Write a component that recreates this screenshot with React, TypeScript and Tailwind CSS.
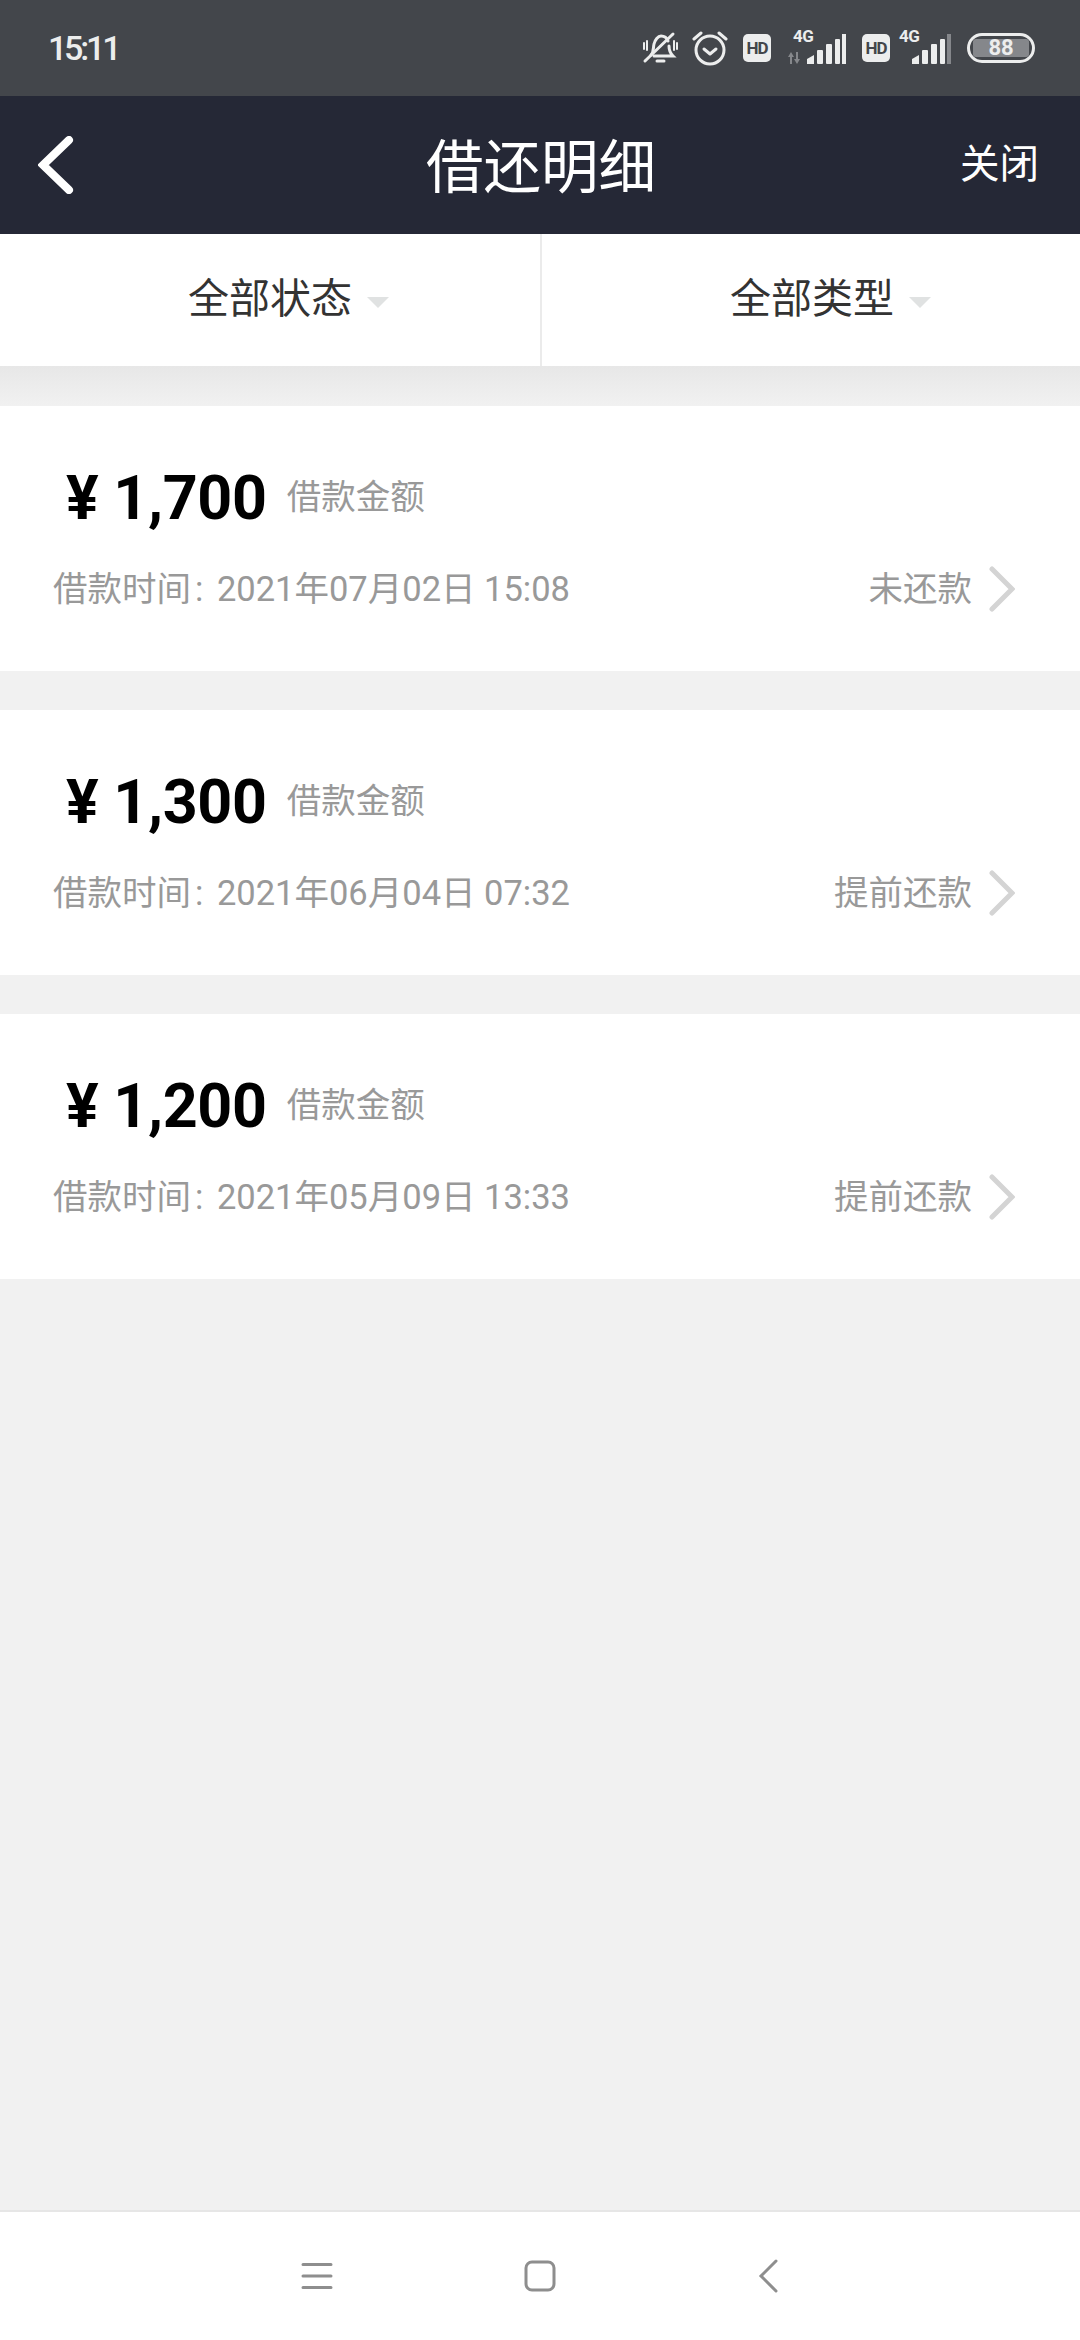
import { ReactNode } from 'react';

const loans = [
  { amount: '1,700', time: '2021年07月02日 15:08', status: '未还款' },
  { amount: '1,300', time: '2021年06月04日 07:32', status: '提前还款' },
  { amount: '1,200', time: '2021年05月09日 13:33', status: '提前还款' },
];

function Bars({ dim }: { dim?: boolean }) {
  return (
    <svg width="40" height="30" viewBox="0 0 40 30">
      <path d="M1 30V25L8 21V30Z" fill="#eceded" />
      <rect x="11" y="16" width="6" height="14" rx="1" fill="#eceded" />
      <rect x="20" y="10" width="6" height="20" rx="1" fill="#eceded" />
      <rect x="29" y="5" width="5" height="25" rx="1" fill="#eceded" />
      <rect x="36" y="0" width="4" height="30" fill={dim ? '#85878b' : '#eceded'} />
    </svg>
  );
}

function HdBadge() {
  return (
    <span className="flex h-[28px] w-[28px] items-center justify-center rounded-[5px] bg-[#eceded] text-[17px] font-bold leading-none tracking-[-1px] text-[#43464b]">
      HD
    </span>
  );
}

function StatusBar() {
  return (
    <div className="flex h-[96px] items-center justify-between bg-[#43464b] pl-[48px] pr-[45px] text-[#eceded]">
      <span className="text-[34px] font-medium tracking-[-3.2px]">15:11</span>
      <div className="flex items-center">
        <svg width="36" height="34" viewBox="0 0 36 34" fill="none" stroke="#eceded" strokeWidth="3" strokeLinecap="round">
          <path d="M9 24c3-3 2-7 3-11s4-8 7-8c4 0 6 2 7 5" />
          <path d="M27 15c0 4 1 7 4 10H12" />
          <path d="M3 30L31 3" />
          <path d="M15 30h7" />
          <path d="M2 12v6M35 12v6" strokeWidth="2" />
          <path d="M5 10v9M32 10v9" strokeWidth="2" />
        </svg>
        <svg className="ml-[14px]" width="36" height="36" viewBox="0 0 36 36" fill="none" stroke="#eceded" strokeWidth="3" strokeLinecap="round" strokeLinejoin="round">
          <circle cx="18" cy="20" r="14" />
          <path d="M12 19l6 5 6-5" />
          <path d="M2 9l7-6M34 9l-7-6" />
        </svg>
        <span className="ml-[15px]"><HdBadge /></span>
        <div className="relative ml-[17px] h-[32px] w-[58px]">
          <span className="absolute left-[5px] top-[-4px] text-[17px] font-bold leading-[16px] tracking-[-0.5px]">4G</span>
          <svg className="absolute bottom-0 left-0" width="14" height="12" viewBox="0 0 14 12" fill="#85878b">
            <path d="M3 0L6 5H4V12H2V5H0ZM8 0H10V7H12L9 12L6 7H8Z" />
          </svg>
          <span className="absolute bottom-0 right-0"><Bars /></span>
        </div>
        <span className="ml-[16px]"><HdBadge /></span>
        <div className="relative ml-[9px] h-[32px] w-[52px]">
          <span className="absolute left-0 top-[-4px] text-[17px] font-bold leading-[16px] tracking-[-0.5px]">4G</span>
          <span className="absolute bottom-0 right-0"><Bars dim /></span>
        </div>
        <div className="ml-[16px] flex h-[30px] w-[68px] items-center justify-center rounded-full border-[3px] border-[#eceded] p-[3px]">
          <span className="flex h-full w-full items-center justify-center rounded-[3px] bg-[#85878b] text-[22px] font-bold leading-none">88</span>
        </div>
      </div>
    </div>
  );
}

function NavBar() {
  return (
    <div className="flex h-[138px] items-center bg-[#252836] px-[38px] text-white">
      <div className="flex-1">
        <svg width="36" height="58" viewBox="0 0 36 58" fill="none" stroke="white" strokeWidth="8" strokeLinecap="round" strokeLinejoin="miter">
          <path d="M31 4L5 29L31 54" />
        </svg>
      </div>
      <span className="pl-[5px] pt-[8px] text-[57.5px] font-normal leading-none">借还明细</span>
      <div className="flex flex-1 justify-end pr-[3px]">
        <span className="text-[39.5px] leading-none">关闭</span>
      </div>
    </div>
  );
}

function FilterButton({ label, divider }: { label: string; divider?: boolean }) {
  return (
    <div className={`flex items-center justify-center ${divider ? 'w-[542px] border-r-2 border-[#ebebeb]' : 'flex-1 pl-[2px]'}`}>
      <span className="relative text-[41px] text-[#333333]">
        {label}
        <span className="absolute left-full top-1/2 ml-[15px] h-0 w-0 -translate-y-[3px] border-x-[11px] border-t-[11px] border-x-transparent border-t-[#e0e2e2]" />
      </span>
    </div>
  );
}

function LoanCard({ amount, time, status }: { amount: string; time: string; status: string }): ReactNode {
  return (
    <div className="flex h-[265px] flex-col bg-white pl-[53px] pr-[65px]">
      <div className="mt-[57px] flex items-center pl-[13px]">
        <span className="text-[61px] font-bold leading-[70px] tracking-[-0.3px] text-black">¥ {amount}</span>
        <span className="ml-[20px] text-[34.5px] text-[#999999]">借款金额</span>
      </div>
      <div className="mt-[26px] flex items-center justify-between">
        <span className="text-[34.5px] leading-[60px] text-[#999999]">
          借款时间<span className="ml-[4px] mr-[5px]">:</span> {time}
        </span>
        <div className="flex items-center gap-[17px]">
          <span className="text-[34.5px] leading-[60px] text-[#999999]">{status}</span>
          <svg width="26" height="46" viewBox="0 0 26 46" fill="none" stroke="#d4d4d4" strokeWidth="5" strokeLinecap="round">
            <path d="M3 3L23 23L3 43" />
          </svg>
        </div>
      </div>
    </div>
  );
}

export default function App() {
  return (
    <div className="flex h-[2340px] w-[1080px] flex-col overflow-hidden bg-[#f1f1f1] font-['Roboto','Noto_Sans_CJK_SC',sans-serif]">
      <StatusBar />
      <NavBar />
      <div className="flex h-[132px] bg-white">
        <FilterButton label="全部状态" divider />
        <FilterButton label="全部类型" />
      </div>
      <div className="h-[40px] bg-gradient-to-b from-[#e7e7e7] to-[#f1f1f1]" />
      <div className="flex flex-col gap-[39px]">
        {loans.map((l) => (
          <LoanCard key={l.time} {...l} />
        ))}
      </div>
      <div className="mt-auto flex h-[130px] items-center justify-center gap-[187px] border-t-2 border-[#e6e6e6] bg-white pl-[5px]">
        <div className="flex w-[36px] justify-center">
          <svg width="32" height="28" viewBox="0 0 32 28" stroke="#8e8e8e" strokeWidth="3" strokeLinecap="round">
            <path d="M2 2.5H30M2 14H30M2 25.5H30" />
          </svg>
        </div>
        <div className="flex w-[36px] justify-center">
          <svg width="32" height="32" viewBox="0 0 32 32" fill="none" stroke="#8e8e8e" strokeWidth="3">
            <rect x="2" y="2" width="28" height="28" rx="6" />
          </svg>
        </div>
        <div className="ml-[5px] flex w-[36px] justify-center">
          <svg width="20" height="34" viewBox="0 0 20 34" fill="none" stroke="#8e8e8e" strokeWidth="3" strokeLinecap="round">
            <path d="M18 2L3 17L18 32" />
          </svg>
        </div>
      </div>
    </div>
  );
}
